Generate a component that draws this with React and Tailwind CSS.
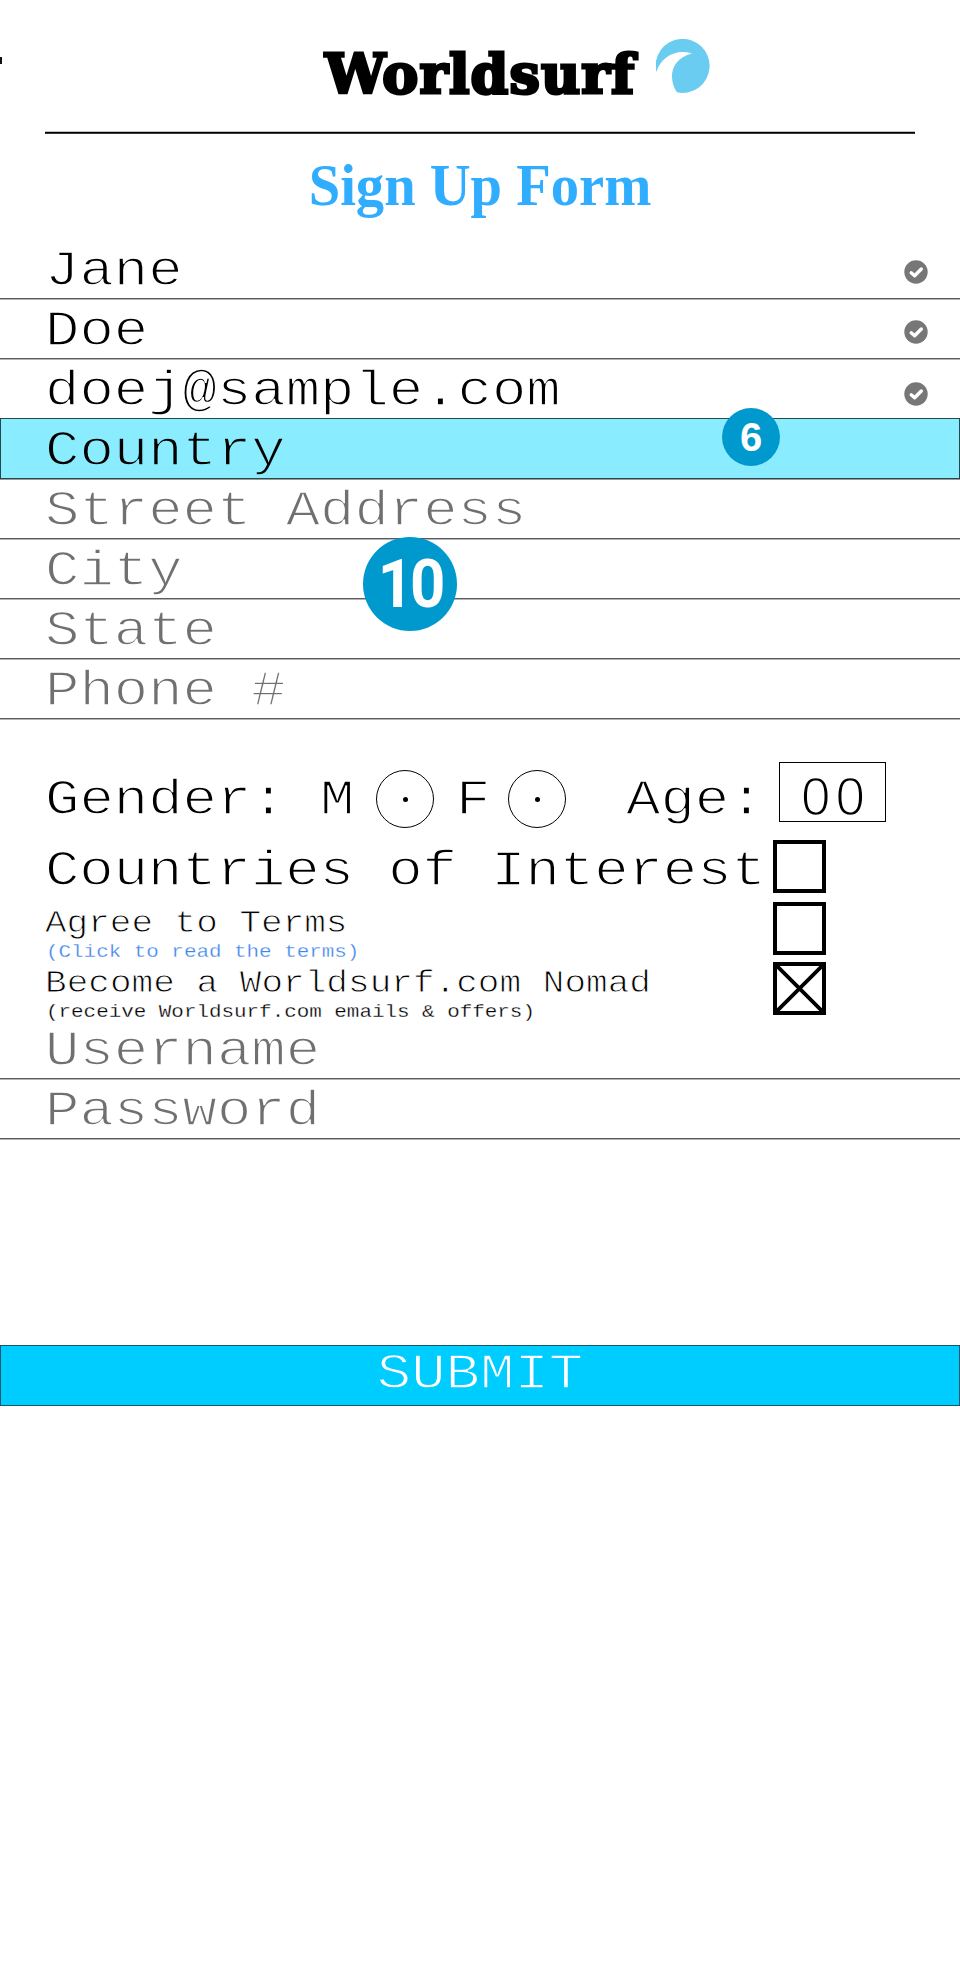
import React from "react";

const base =
  "inline-block whitespace-pre font-['Liberation_Mono','Courier_New',monospace] text-[57.3px] leading-[60px] origin-[0_45px] scale-y-[0.88]";
const mono = base + " [-webkit-text-stroke:1.6px_white]";

function CheckMark({ className }) {
  return (
    <svg viewBox="0 0 24 24" className={"h-6 w-6 shrink-0 " + className}>
      <circle cx="12" cy="12" r="11.7" fill="#777" />
      <path d="M7.2 12.8 L10.6 15.8 L17.3 9" fill="none" stroke="#fff" strokeWidth="3.4" strokeLinecap="round" strokeLinejoin="round" />
    </svg>
  );
}

function Field({ text, filled, check }) {
  return (
    <div className="flex h-15 items-start justify-between border-b border-[#5c5c5c] pl-[45px] pr-8 pt-px shadow-[0_1px_0_#b4b4b4]">
      <span className={mono + (filled ? " text-black" : " text-[#707070]")}>{text}</span>
      {check && <CheckMark className={check} />}
    </div>
  );
}

function Radio() {
  return (
    <span className="flex h-[58px] w-[58px] shrink-0 items-center justify-center rounded-full border border-black">
      <span className="h-[5px] w-[5px] rounded-full bg-black" />
    </span>
  );
}

function Box({ checked }) {
  return (
    <span className="block h-[53px] w-[53px] border-4 border-black">
      {checked && (
        <svg viewBox="0 0 45 45" className="h-full w-full">
          <path d="M0 0 L45 45 M45 0 L0 45" stroke="#000" strokeWidth="3.8" />
        </svg>
      )}
    </span>
  );
}

export default function App() {
  return (
    <main className="relative h-[1979px] w-[960px] overflow-hidden bg-white text-black">
      <header className="flex h-[131px] items-start">
        <span className="mt-[57px] h-[7px] w-0.5 bg-[#111]" />
        <span className="ml-[323px] mt-[39px] w-[331px] whitespace-nowrap font-['DejaVu_Serif',serif] text-[54px] font-bold leading-[70px] tracking-[1.1px] [-webkit-text-stroke:3px_black]">
          Worldsurf
        </span>
        <svg viewBox="0 0 54 54" className="mt-[39px] h-[54px] w-[54px]">
          <path d="M0.3 33 A27 27 0 1 1 21 53.3 C12 40 14 20 36 14.5 C20 9.5 5 18 0.3 33Z" fill="#6bccf2" />
        </svg>
      </header>
      <div className="mx-[45px] h-[3px] border-b border-t border-b-[#3a3a38] border-t-[#c2c8c0] bg-black" />
      <h1 className="h-[105px] scale-x-[0.943] pt-[17px] text-center font-['Liberation_Serif',serif] text-[60px] font-bold leading-[68px] text-[#30adff]">
        Sign Up Form
      </h1>

      <section>
        <Field text="Jane" filled check="mt-5" />
        <Field text="Doe" filled check="mt-5" />
        <Field text="doej@sample.com" filled check="mt-[22px]" />
        <div className="-mt-px h-[61px] border border-[#24484c] bg-[#8aedff] pl-11 pt-px shadow-[0_1px_0_#999]">
          <span className={base + " [-webkit-text-stroke:1.6px_#8aedff]"}>Country</span>
        </div>
        <Field text="Street Address" />
        <Field text="City" />
        <Field text="State" />
        <Field text="Phone #" />
      </section>

      <section className="h-[300px] pl-[45px] pt-[43px]">
        <div className="flex h-[71px] items-start">
          <span className={mono + " mt-[7px] w-[331px]"}>{"Gender: M"}</span>
          <span className="mt-2"><Radio /></span>
          <span className={mono + " ml-[22px] mt-[7px] w-[52px]"}>F</span>
          <span className="mt-2"><Radio /></span>
          <span className={mono + " ml-[60px] mt-[7px] w-[153px]"}>Age:</span>
          <span className="h-[60px] w-[107px] whitespace-nowrap border border-black pl-[21px] pt-1 font-['Liberation_Sans',sans-serif] text-[53px] leading-[60px] tracking-[4.9px] [-webkit-text-stroke:1.6px_white]">
            00
          </span>
        </div>
        <div className="flex">
          <div className="w-[728px]">
            <div className="h-[72px] pt-[7px]">
              <span className={mono + " tracking-[-0.06px]"}>Countries of Interest</span>
            </div>
            <div className="flex flex-col font-['Liberation_Mono',monospace]">
              <span className="block h-9 origin-[0_27px] scale-y-[0.87] whitespace-pre text-[36px] leading-[36px] [-webkit-text-stroke:1px_white]">Agree to Terms</span>
              <span className="-mt-px block h-[25px] origin-[0_18px] scale-y-[0.87] whitespace-pre pl-px text-[20.9px] leading-6 text-[#3e86ea] [-webkit-text-stroke:0.3px_white]">(Click to read the terms)</span>
              <span className="block h-9 origin-[0_27px] scale-y-[0.87] whitespace-pre text-[36px] leading-[36px] tracking-[0.04px] [-webkit-text-stroke:1px_white]">Become a Worldsurf.com Nomad</span>
              <span className="-mt-px block h-6 origin-[0_18px] scale-y-[0.87] whitespace-pre pl-px text-[20.9px] leading-6 [-webkit-text-stroke:0.3px_white]">(receive Worldsurf.com emails &amp; offers)</span>
            </div>
          </div>
          <div className="flex flex-col pt-[7px]">
            <Box />
            <span className="mt-[9px]"><Box /></span>
            <span className="mt-[7px]"><Box checked /></span>
          </div>
        </div>
      </section>

      <section>
        <Field text="Username" />
        <Field text="Password" />
      </section>

      <button className="mt-[206px] flex h-[61px] w-full items-start justify-center border border-[#165665] bg-[#00cdff]">
        <span className={base + " -mt-[3px] text-white [-webkit-text-stroke:1.6px_#00cdff]"}>SUBMIT</span>
      </button>

      <span className="absolute left-[722px] top-[408px] flex h-[58px] w-[58px] items-center justify-center rounded-full bg-[#0099ce] font-['Liberation_Sans',sans-serif] text-[40px] font-bold leading-none text-white">
        6
      </span>
      <span className="absolute left-[363px] top-[537px] flex h-[94px] w-[94px] items-center justify-center rounded-full bg-[#0099ce] font-['Roboto',sans-serif] text-[67px] font-bold leading-none tracking-[-3.5px] text-white">
        <span className="scale-x-[0.92]">10</span>
      </span>
    </main>
  );
}
